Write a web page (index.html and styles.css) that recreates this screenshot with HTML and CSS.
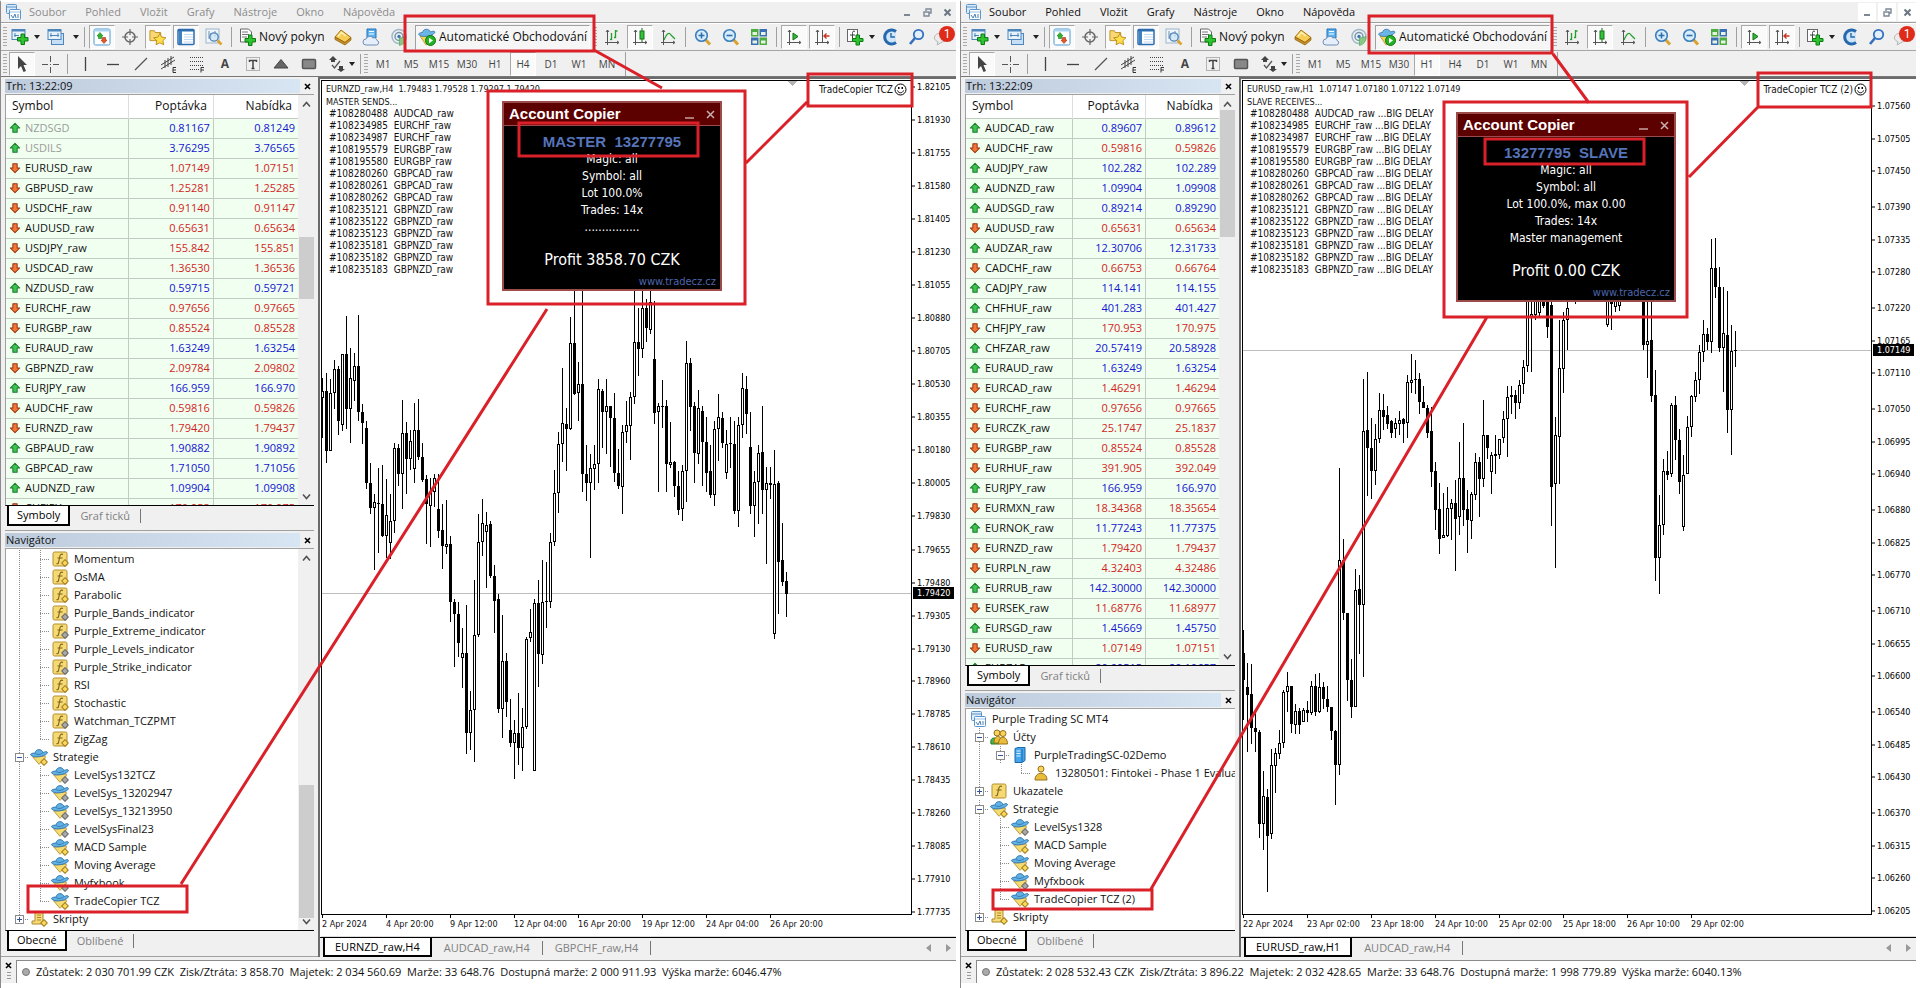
FILE: index.html
```html
<!DOCTYPE html>
<html lang="cs">
<head>
<meta charset="utf-8">
<title>Account Copier – MetaTrader 4</title>
<link rel="stylesheet" href="styles.css">
</head>
<body>
<svg class="sprite" aria-hidden="true">
  <symbol id="app" viewBox="0 0 16 16"><rect x="1.5" y=".5" width="10" height="9" rx="1" fill="#dcebfa" stroke="#5b94c9"/><path d="M2 3h9" stroke="#5b94c9"/><rect x="4.500" y="5.500" width="11" height="10" rx="1" fill="#fff" stroke="#5b94c9"/><path d="M5 8h10" stroke="#9cc3e6"/><path d="M6 11l2 3 2-4 1 4M13 10v4" stroke="#4a80b5" fill="none"/></symbol>
  <symbol id="newchart" viewBox="0 0 18 18"><rect x="1" y="1.500" width="13" height="10" fill="#e8f2fb" stroke="#4d86bd"/><path d="M1 2.500h13" stroke="#4d86bd" stroke-width="2"/><path d="M4 5v4M3 7.500h5" stroke="#4d86bd"/><path d="M10 6h3.500v3.500H17v3.500h-3.500v3.500H10V13H6.500V9.500H10z" fill="#2fc32f" stroke="#0b7a12"/></symbol>
  <symbol id="profiles" viewBox="0 0 18 18"><rect x="4.500" y="5.500" width="12" height="11" fill="#c9dff3" stroke="#4d86bd"/><rect x="1" y="1.500" width="13" height="10" fill="#e8f2fb" stroke="#4d86bd"/><path d="M1 2.500h13" stroke="#4d86bd" stroke-width="2"/><path d="M4 5v4M11 5v4M3 7.500h9" stroke="#4d86bd"/></symbol>
  <symbol id="watch" viewBox="0 0 18 18"><rect x="1" y="1" width="16" height="16" rx="1.500" fill="#fff" stroke="#4d9ad0"/><path d="M1.500 2.500h15" stroke="#a5d3f1" stroke-width="2"/><path d="M7 4.500l3 3.500H8.500v2.500h-3V8H4z" fill="#2fb52f" stroke="#157a1b" stroke-width=".6"/><path d="M11 15.500L8 12h1.500V9.500h3V12H14z" fill="#e9552b" stroke="#a52f10" stroke-width=".6"/></symbol>
  <symbol id="target" viewBox="0 0 18 18"><circle cx="9" cy="9" r="5" fill="none" stroke="#666" stroke-width="1.500"/><path d="M9 1v6M9 11v6M1 9h6M11 9h6" stroke="#666" stroke-width="1.200"/></symbol>
  <symbol id="folder" viewBox="0 0 20 18"><path d="M1 2h5l1 2h6v9H1z" fill="#f7d873" stroke="#bb8d20"/><path d="M12 5l2.100 4.200 4.700.6-3.400 3.200.9 4.600L12 15.400 7.800 17.600l.8-4.600-3.400-3.200 4.700-.6z" fill="#ffe04a" stroke="#b88617"/></symbol>
  <symbol id="navpane" viewBox="0 0 18 18"><rect x="1" y="1.500" width="16" height="15" rx="1" fill="#fff" stroke="#2d6cad" stroke-width="1.500"/><path d="M1 2.500h16" stroke="#2d6cad" stroke-width="2"/><rect x="2" y="3" width="3" height="13" fill="#3f80c2"/><path d="M7 6.500h9M7 9h9M7 11.500h9M7 14h9" stroke="#c1daf3"/></symbol>
  <symbol id="tester" viewBox="0 0 18 18"><rect x="1" y="1" width="13" height="14" fill="#f0f6fc" stroke="#9bb4cc"/><path d="M4 3v8M6 5v5M10 3v6" stroke="#6d8fb3"/><circle cx="9" cy="9" r="4.200" fill="#cfe6f8" fill-opacity=".8" stroke="#5183b4" stroke-width="1.300"/><path d="M12.500 12.500l4 4" stroke="#dca32c" stroke-width="2.500"/></symbol>
  <symbol id="order" viewBox="0 0 18 18"><path d="M1.500 1h8l3 3v10h-11z" fill="#fff" stroke="#666"/><path d="M3 4h6M3 6.500h7M3 9h5" stroke="#777"/><path d="M9.500 7h3.500v3.500h3.500v3.500H13v3.500H9.500V14H6v-3.500h3.500z" fill="#2fc32f" stroke="#0b7a12"/></symbol>
  <symbol id="book" viewBox="0 0 18 18"><path d="M1 9l6-7 10 7.500-6 5z" fill="#f5cd57" stroke="#a8761a"/><path d="M1 9v2.500l10 5.500 6-5V9.500l-6 5z" fill="#c98d24" stroke="#8a5d10" stroke-width=".7"/><path d="M4 8.500L7.500 4.500 12 8" stroke="#fff2b8" stroke-width="1.500" fill="none"/></symbol>
  <symbol id="cloud" viewBox="0 0 18 18"><path d="M5 1h9v9l-9 1z" fill="#5bb2ee" stroke="#2071b8"/><path d="M7 3.500h5M7 6h5" stroke="#fff"/><path d="M4 17a3 3 0 0 1 0-6 4 4 0 0 1 7-1 3 3 0 0 1 4 2.500 2.300 2.300 0 0 1-.5 4.500z" fill="#e5eefa" stroke="#6f8fbb"/></symbol>
  <symbol id="signal" viewBox="0 0 18 18"><circle cx="9" cy="8.500" r="7" fill="none" stroke="#9fb9c9" stroke-width="1.500"/><circle cx="9" cy="8.500" r="4" fill="none" stroke="#7797ad" stroke-width="1.500"/><path d="M9.500 10v7.500a8 8 0 0 0 6.500-9l-3 1z" fill="#8ac786" stroke="#4fae51" stroke-width=".7"/><circle cx="9" cy="8.500" r="1.700" fill="#3c79b4"/></symbol>
  <symbol id="auto" viewBox="0 0 18 18"><path d="M2 8l6 9 7-4V8z" fill="#f3d65a" stroke="#b9902a" stroke-width=".8"/><path d="M.7 6.500C3 9.500 13 9 17 4.500c0-1.500-2-1.500-3-1L12.500 4C11 0 5 .500 4.500 4.500 2 4.500.5 5.500.7 6.500z" fill="#6cb6e6" stroke="#2b73ad" stroke-width=".8"/><circle cx="12.500" cy="12.500" r="5" fill="#24b324" stroke="#0d7513"/><path d="M11 9.800v5.400l4-2.700z" fill="#fff"/></symbol>
  <symbol id="bars" viewBox="0 0 18 18"><path d="M4.500 2v15M2 14.500h14M3 4l1.500-2L6 4M14 13l2 1.500L14 16" fill="none" stroke="#555"/><path d="M8.500 5v7M7 11.500h1.500M12.500 2v8M12.500 3h2M11 9.500h1.500" stroke="#259d2c" stroke-width="1.300"/></symbol>
  <symbol id="candle" viewBox="0 0 18 18"><path d="M4.500 2v15M2 14.500h14M3 4l1.500-2L6 4M14 13l2 1.500L14 16" fill="none" stroke="#555"/><path d="M11 0v14" stroke="#127019"/><rect x="9" y="3" width="4" height="8" fill="#35c23b" stroke="#127019"/></symbol>
  <symbol id="line" viewBox="0 0 18 18"><path d="M4.500 2v15M2 14.500h14M3 4l1.500-2L6 4M14 13l2 1.500L14 16" fill="none" stroke="#555"/><path d="M5 12c3-7 5-8 7-5l4 4" stroke="#259d2c" fill="none" stroke-width="1.200"/></symbol>
  <symbol id="zoomin" viewBox="0 0 18 18"><path d="M11 11l5 5.500" stroke="#d9a32e" stroke-width="3"/><circle cx="7.500" cy="7.500" r="5.800" fill="#d8edfb" stroke="#3b7ebd" stroke-width="1.600"/><path d="M4.500 7.500h6M7.500 4.500v6" stroke="#2f6eae" stroke-width="1.600"/></symbol>
  <symbol id="zoomout" viewBox="0 0 18 18"><path d="M11 11l5 5.500" stroke="#d9a32e" stroke-width="3"/><circle cx="7.500" cy="7.500" r="5.800" fill="#d8edfb" stroke="#3b7ebd" stroke-width="1.600"/><path d="M4.500 7.500h6" stroke="#2f6eae" stroke-width="1.600"/></symbol>
  <symbol id="tiles" viewBox="0 0 18 18"><path d="M1 1h7.500v7.500H1zM9.500 9.500H17V17H9.500z" fill="#4cae3f"/><path d="M9.500 1H17v7.500H9.500zM1 9.500h7.500V17H1z" fill="#3d6fb5"/><path d="M2.500 4h4.500v3H2.500zM11 4h4.500v3H11zM2.500 12.500h4.500v3H2.500zM11 12.500h4.500v3H11z" fill="#e7f3e2"/></symbol>
  <symbol id="scroll" viewBox="0 0 18 18"><path d="M4.500 2v15M2 14.500h14M3 4l1.500-2L6 4M14 13l2 1.500L14 16" fill="none" stroke="#555"/><path d="M8 5v7l5-3.500z" fill="#35b83b" stroke="#127019"/></symbol>
  <symbol id="shift" viewBox="0 0 18 18"><path d="M4.500 2v15M2 14.500h14M3 4l1.500-2L6 4M14 13l2 1.500L14 16M9.500 2v12" fill="none" stroke="#555"/><path d="M11 8h5.500M13.500 5.500L11 8l2.500 2.500" fill="none" stroke="#c8341d" stroke-width="1.400"/></symbol>
  <symbol id="indic" viewBox="0 0 18 18"><rect x="1.500" y="1.500" width="10" height="12" fill="#fff" stroke="#666"/><path d="M9 3.500c-2-1-2.500 0-2.500 2v6M4 7h5" stroke="#444" fill="none"/><path d="M10 7h3.500v3.500H17v3h-3.500V17H10v-3.500H6.500v-3H10z" fill="#2fc32f" stroke="#0b7a12"/></symbol>
  <symbol id="clock" viewBox="0 0 18 18"><path d="M14 3.500A7 7 0 1 0 14 14.500" fill="#cfe5f8" stroke="#2568ad" stroke-width="3"/><path d="M9 5v4h4" stroke="#2568ad" fill="none" stroke-width="1.400"/></symbol>
  <symbol id="find" viewBox="0 0 18 18"><circle cx="10.500" cy="6.500" r="4.700" fill="#e3f0fc" stroke="#3470bd" stroke-width="1.800"/><path d="M7 10l-5 6" stroke="#3470bd" stroke-width="2.600"/></symbol>
  <symbol id="chat" viewBox="0 0 18 18"><path d="M7 5c8-1 11 7 2 9l-5 3 1-3C-1 11 1 6 7 5z" fill="#ececec" stroke="#b5b5b5"/></symbol>
  <symbol id="cursor" viewBox="0 0 18 18"><path d="M5 1v13l3-3 2.500 6 2.500-1-2.500-6H14z" fill="#444"/></symbol>
  <symbol id="cross" viewBox="0 0 18 18"><path d="M9.500 1v6M9.500 12v6M1 9.500h6M12 9.500h6M9 9.500h1" stroke="#555"/></symbol>
  <symbol id="vline" viewBox="0 0 18 18"><path d="M9.500 2v14" stroke="#444" stroke-width="1.300"/></symbol>
  <symbol id="hline" viewBox="0 0 18 18"><path d="M3 9.500h12" stroke="#444" stroke-width="1.300"/></symbol>
  <symbol id="trend" viewBox="0 0 18 18"><path d="M3 15L15 3" stroke="#555" stroke-width="1.200"/></symbol>
  <symbol id="channel" viewBox="0 0 18 18"><path d="M1 10L14 2M1 14L15 5M5 5v8M8 3v9M11 1v9" stroke="#444"/><path d="M16 12.500h-3v5h3M13 15h3" stroke="#333" fill="none"/></symbol>
  <symbol id="fibo" viewBox="0 0 18 18"><path d="M2 2.500h14M2 6.500h14M2 10.500h14" stroke="#444" stroke-dasharray="1 1"/><path d="M2 14.500h9" stroke="#444" stroke-dasharray="1 1"/><path d="M16 12.500h-3v5M13 15h3" stroke="#333" fill="none"/></symbol>
  <symbol id="label" viewBox="0 0 18 18"><rect x="2.500" y="2.500" width="13" height="13" fill="none" stroke="#777" stroke-dasharray="1 1"/><path d="M5.500 7V5.500h7V7M9 5.500v8M7.500 13.500h3" stroke="#444" stroke-width="1.500" fill="none"/></symbol>
  <symbol id="tri" viewBox="0 0 18 18"><path d="M9 4.500l7 8.500H2z" fill="#666" stroke="#444"/></symbol>
  <symbol id="rect" viewBox="0 0 18 18"><rect x="2.500" y="4.500" width="13" height="9" rx="1" fill="#888" stroke="#555" stroke-width="1.500"/></symbol>
  <symbol id="arrows" viewBox="0 0 18 18"><path d="M5 1l4 4H7v2H3V5H1zM13 17l-4-3h2v-3h4v3h2z" fill="#444"/><path d="M4 10l2.500 3L12 6" stroke="#555" fill="none" stroke-width="1.300"/></symbol>
  <symbol id="up" viewBox="0 0 14 14"><path d="M7 1.500L12.500 7H9.500v5h-5V7h-3z" fill="#3cc552" stroke="#1d7a2c" stroke-width="1.200" stroke-linejoin="round"/></symbol>
  <symbol id="down" viewBox="0 0 14 14"><path d="M7 12.500L1.500 7h3V2h5v5h3z" fill="#f47638" stroke="#98360f" stroke-width="1.200" stroke-linejoin="round"/></symbol>
  <symbol id="fx" viewBox="0 0 16 16"><rect x="1" y="1" width="14" height="14" rx="1.500" fill="#f5da74" stroke="#b58e30"/><path d="M11 3.500c-2-1-3 .5-3.300 2.500L6.500 11.500c-.3 1.200-1 1.500-2 1M5.500 7h5" stroke="#7d611b" fill="none" stroke-width="1.100"/></symbol>
  <symbol id="ea" viewBox="0 0 16 16"><path d="M2.500 8L8 14.500 13.500 9V7z" fill="#f5dc70" stroke="#b9902a" stroke-width=".8"/><path d="M.5 6C2 9 12 8.500 15.500 4.500c0-1.500-1.500-1.500-2.500-1L11.500 4C10.500.5 5 .5 4.500 4.500 2 4.500.3 5 .5 6z" fill="#62b1e4" stroke="#2b73ad" stroke-width=".8"/><path d="M4.500 5c2 1.300 5 1 7-.8" stroke="#2b73ad" stroke-width=".7" fill="none"/></symbol>
  <symbol id="gem" viewBox="0 0 6 6"><path d="M3 .5L5.500 3 3 5.500.5 3z" fill="#f9d95c" stroke="#a98020" stroke-width=".8"/></symbol>
  <symbol id="gemgray" viewBox="0 0 6 6"><path d="M3 .5L5.500 3 3 5.500.5 3z" fill="#a9a9a9" stroke="#6c6c6c" stroke-width=".8"/></symbol>
  <symbol id="script" viewBox="0 0 16 16"><path d="M4 1h8v9h2v3H1v-3h3z" fill="#f5db78" stroke="#b1892c"/><path d="M6 4h4M6 6.500h4M6 9h4" stroke="#b1892c"/></symbol>
  <symbol id="users" viewBox="0 0 18 16"><path d="M1 15c-1-6 2-6 4-6l4 6z" fill="#4bb648" stroke="#23782b"/><circle cx="7" cy="4" r="3" fill="#f6d35a" stroke="#97701b"/><path d="M4 14c0-8 6-8 7-4v4z" fill="#e9bd3c" stroke="#97701b"/><circle cx="13" cy="4.500" r="3" fill="#f6d35a" stroke="#97701b"/><path d="M8.500 15c0-9 9-9 9 0z" fill="#e9bd3c" stroke="#97701b"/></symbol>
  <symbol id="user" viewBox="0 0 16 16"><circle cx="8" cy="4" r="3" fill="#f6d35a" stroke="#97701b"/><path d="M2 15c0-9 12-9 12 0z" fill="#e9bd3c" stroke="#97701b"/></symbol>
  <symbol id="server" viewBox="0 0 16 16"><path d="M3 1.500l3-1h7v13l-3 2H3z" fill="#45a5ea" stroke="#1b69ad"/><path d="M10 2v13" stroke="#1b69ad"/><path d="M4.500 4h4M4.500 6.500h4M4.500 9h4" stroke="#dff0fc"/></symbol>
</svg>
<main class="screen" id="screen"></main>
<script src="app.js"></script>
</body>
</html>
```
FILE: styles.css
```css
* { box-sizing: border-box; }
body {
  margin: 0;
  background: #fff;
  color: #111;
  font: 11px/18px "Open Sans", "Noto Sans", sans-serif;
}
button { font: inherit; color: inherit; background: none; border: 0; padding: 0; margin: 0; }
ul { list-style: none; margin: 0; padding: 0; }
.sprite { position: absolute; width: 0; height: 0; }
.screen { display: flex; min-height: 100vh; height: 100vh; overflow: hidden; }

.window {
  flex: 1;
  min-width: 0;
  display: flex;
  flex-direction: column;
  position: relative;
  border-left: 1px solid #8a8a8a;
  border-top: 2px solid #fff;
  padding-bottom: 5px;
  background: #fff;
  overflow: hidden;
}

/* menu */
.menubar { display: flex; align-items: center; height: 21px; background: #f0f0f0; border-bottom: 1px solid #a0a0a0; padding-left: 4px; margin-right: 4px; }
.menubar .icon { margin-right: 8px; }
.menubar nav { display: flex; gap: 19px; flex: 1; }
.inactive .menubar nav { color: #8c8c8c; }
.mdi { display: flex; gap: 2px; height: 18px; }
.mdi button { width: 18px; display: grid; place-items: center; background: #fff; }
.inactive .mdi button { background: #f0f0f0; }
.icon { display: block; flex: none; }

/* toolbars */
.toolbar { display: flex; align-items: center; background: #f0f0f0; border-bottom: 1px solid #a6a6a6; padding-left: 2px; margin-right: 4px; }
.toolbar.main { height: 28px; border-top: 1px solid #fff; }
.toolbar.tools { height: 26px; color: #444; border-bottom-color: #777; font-size: 10px; }
.grip { width: 4px; height: 20px; margin-right: 1px; background: repeating-linear-gradient(#aaa 0 1px, transparent 1px 3px); flex: none; }
.tool { flex: none; width: 28px; height: 24px; display: grid; place-items: center; position: relative; }
.tool.pressed { background: #fafafa; border: 1px solid #a8a8a8; border-right-color: #fff; border-bottom-color: #fff; width: 26px; margin: 0 1px; }
.tool b { font: bold 12px "Open Sans", sans-serif; }
.tool.near { width: 23px; }
.drop { flex: none; width: 11px; height: 24px; display: grid; place-items: center; }
.tools .drop { margin-left: -5px; }
.drop::after { content: ""; border: 3px solid transparent; border-top: 4px solid #222; border-bottom: 0; }
.sep { width: 1px; height: 20px; background: #a0a0a0; margin: 0 3px; flex: none; }
.sep.tall { height: 24px; margin: 0 3px 0 4px; }
.order { display: flex; align-items: center; gap: 2px; width: 94px; padding-left: 4px; font-size: 12px; white-space: nowrap; }
.auto { display: flex; align-items: center; gap: 3px; width: 175px; height: 25px; padding-left: 2px; font-size: 12px; white-space: nowrap; background: #f6f6f6; border: 1px solid #a0a0a0; border-right-color: #fff; border-bottom-color: #fff; margin: 0 3px 0 2px; }
.badge { position: absolute; left: 11px; top: 1px; width: 16px; height: 16px; border-radius: 50%; background: #df2b1a; color: #fff; font: 12px/16px Roboto, sans-serif; text-align: center; }

/* body */
.body { flex: 1; min-height: 0; display: flex; }
.dock { flex: none; width: 317px; display: flex; flex-direction: column; background: #f0f0f0; padding: 2px 4px 5px 4px; border-bottom: 1px solid #a0a0a0; }
.active .dock { width: 278px; }
.panel-title { display: flex; justify-content: space-between; align-items: center; height: 14px; line-height: 14px; margin-bottom: 1px; padding-left: 1px; background: linear-gradient(90deg, #bdcbdc, #d9e6f4); }
.panel-title button { width: 14px; height: 14px; background: #f0f0f0; display: grid; place-items: center; }
.market { flex: 1; min-height: 0; display: flex; flex-direction: column; }
.list { flex: 1; min-height: 0; display: flex; overflow: hidden; background: #fff; border: 1px solid #a0a0a0; border-right: 0; border-bottom: 1px solid #000; }
.list .content { flex: 1; min-width: 0; overflow: hidden; }
.scroll { flex: none; width: 16px; display: flex; flex-direction: column; align-items: center; background: #f0f0f0; padding: 6px 0 5px; }
.scroll i { display: block; width: 15px; background: #cdcdcd; }
.scroll .pre { flex: var(--before); }
.scroll i { flex: var(--size); }
.scroll .post { flex: var(--after); }
.quotes { width: 100%; border-collapse: collapse; table-layout: fixed; }
.quotes th { font-weight: 400; font-size: 12px; height: 23px; padding: 0 6px; text-align: right; border-right: 1px solid #ddd; }
.quotes th:first-child { text-align: left; width: 42%; }
.quotes th:last-child { border-right: 0; }
.quotes td { height: 20px; padding: 0 3px; line-height: 18px; background: #f0fff0; border: 1px solid #c3cac3; text-align: right; color: #1414d2; overflow: hidden; }
.quotes td:first-child { border-left: 0; color: #111; text-align: left; padding-left: 3px; }
.quotes td:last-child { border-right: 0; }
.quotes td div { display: flex; align-items: center; gap: 4px; }
.quotes .fall td + td { color: #d21e1e; }
.quotes .off td:first-child { color: #9c9c9c; }

.tabs { display: flex; align-items: center; height: 20px; flex: none; color: #808080; padding-left: 2px; }
.tabs button { height: 20px; padding: 0 10px; }
.tabs button.on { background: #fff; color: #000; border: 2px solid #000; border-top: 0; padding: 0 8px; }
.tabs span { width: 1px; height: 14px; background: #777; }
.navigator { margin-top: 4px; border-top: 1px solid #a0a0a0; padding-top: 2px; flex: none; }
.tree { padding: 1px 0 2px; overflow: hidden; white-space: nowrap; }
.active .tree { padding-bottom: 4px; }
.tree li { display: flex; align-items: center; height: 18px; }
.tree .root { padding-left: 3px; }
.tree .cell { flex: none; width: 21px; height: 18px; display: grid; place-items: center; --v: repeating-linear-gradient(#8a8a8a 0 1px, transparent 1px 2px); --h: repeating-linear-gradient(90deg, #8a8a8a 0 1px, transparent 1px 2px); }
.tree .cell:first-child { margin-left: 3px; }
.tree .v { background: var(--v) 10px 0 / 1px 18px no-repeat; }
.tree .t { background: var(--v) 10px 0 / 1px 18px no-repeat, var(--h) 10px 9px / 10px 1px no-repeat; }
.tree .e { background: var(--v) 10px 0 / 1px 9px no-repeat, var(--h) 10px 9px / 10px 1px no-repeat; }
.tree .glyph { position: relative; flex: none; width: 18px; margin: 0 5px 0 0; display: grid; place-items: center; }
.tree .glyph .icon + .icon { position: absolute; right: 0; bottom: 0; }
.box { width: 9px; height: 9px; border: 1px solid #8a8a8a; background: #fff linear-gradient(#33559a, #33559a) center / 5px 1px no-repeat; }
.box.plus { background: linear-gradient(#33559a, #33559a) center / 5px 1px no-repeat, linear-gradient(#33559a, #33559a) center / 1px 5px no-repeat, #fff; }

/* chart */
.chart { flex: 1; min-width: 0; display: flex; flex-direction: column; border-left: 2px solid #6b6b6b; border-top: 2px solid #6b6b6b; margin-right: 4px; font: 9px/12px "DejaVu Sans Condensed", "DejaVu Sans", sans-serif; background: #fff; padding: 1px 0 0 1px; }
.upper { flex: 1; min-height: 0; display: flex; }
.plot { flex: 1; min-width: 0; position: relative; border: 1px solid #000; overflow: hidden; }
.plot > svg { display: block; width: 100%; height: 100%; }
.axis { flex: none; width: 44px; }
.axis svg { display: block; width: 100%; height: 100%; }
.log { position: absolute; left: 4px; top: 2px; white-space: pre; font-size: 10px; }
.log li { height: 12px; padding-left: 3px; }
.log li:first-child { padding-left: 0; height: 13px; font-size: 9px; }
.log li:nth-child(2) { padding-left: 0; font-size: 9px; }
.expert { position: absolute; right: 4px; top: 2px; display: flex; align-items: center; gap: 1px; font-size: 10px; }
.times { display: flex; height: 22px; flex: none; border-bottom: 1px solid #ddd; padding-left: 1px; white-space: nowrap; }
.times li { width: 64px; padding-top: 3px; flex: none; }
.times li::before { content: ""; display: block; width: 1px; height: 3px; background: #000; margin-top: -3px; }
.chart-tabs { display: flex; align-items: center; height: 20px; flex: none; background: #f0f0f0; border-top: 1px solid #000; margin-left: -1px; padding: 0 4px 0 3px; color: #808080; font: 11px/15px "Open Sans", sans-serif; }
.chart-tabs button { padding: 0 12px; height: 18px; }
.chart-tabs button.on { background: #fff; color: #000; border: 2px solid #000; border-top: 0; height: 19px; margin-top: -1px; padding: 0 10px; }
.chart-tabs span { width: 1px; height: 14px; background: #777; }
.chart-tabs .arrows { width: auto; height: auto; background: none; margin-left: auto; display: flex; gap: 14px; }

/* copier dialog */
.copier { position: absolute; left: 180px; top: 20px; width: 220px; height: 190px; background: #000; border: 2px solid #9c4b4b; color: #fff; text-align: center; font: 12px/17px "DejaVu Sans Condensed", "DejaVu Sans", sans-serif; display: flex; flex-direction: column; }
.active .copier { left: 213px; top: 31px; }
.copier header { display: flex; align-items: center; height: 23px; background: #5c0000; border-bottom: 1px solid #9c4b4b; padding: 0 5px; font: bold 15px/20px "Liberation Sans", Arial, sans-serif; gap: 12px; flex: none; }
.copier header span { flex: 1; text-align: left; }
.copier h2 { margin: 7px 0 1px; font: bold 15px/17px "Liberation Sans", Arial, sans-serif; color: #5674b9; white-space: pre; }
.copier p { margin: 0; }
.copier .profit { margin-top: 14px; font-size: 16px; line-height: 20px; }
.copier a { margin: auto 4px 0 0; text-align: right; color: #4d66ae; text-decoration: none; font-size: 11px; line-height: 15px; }

.status { display: flex; align-items: center; background: #f0f0f0; height: 26px; margin-right: 4px; flex: none; }
.status .side { width: 15px; height: 22px; display: flex; flex-direction: column; align-items: center; gap: 3px; padding-top: 3px; }
.status .side i { width: 4px; height: 8px; background: repeating-linear-gradient(#999 0 1px, transparent 1px 3px); }
.status output { flex: 1; display: flex; align-items: center; gap: 6px; background: #fff; border-top: 1px solid #8a8a8a; border-left: 1px solid #8a8a8a; height: 23px; padding-left: 5px; white-space: pre; margin-top: 2px; }
.dot { width: 8px; height: 8px; border-radius: 50%; background: #aaa; border: 1px solid #777; }
.notes { position: absolute; left: -1px; top: -2px; width: 960px; height: 988px; pointer-events: none; fill: none; stroke: #da2129; stroke-width: 3; }
```
FILE: app.js
```javascript
const icon = (id, w = 18, h = w) => `<svg class="icon" width="${w}" height="${h}"><use href="#${id}"/></svg>`;
const tool = (id, name, cls = '') => `<button class="tool ${cls}" aria-label="${name}">${icon(id)}</button>`;
const drop = '<button class="drop" aria-label="Další volby"></button>';
const sep = '<span class="sep"></span>';
const cross = '<svg width="7" height="7"><path d="M1 1l5 5M6 1L1 6" stroke="#000" stroke-width="1.600"/></svg>';

const signals = [['108280488', 'AUDCAD'], ['108234985', 'EURCHF'], ['108234987', 'EURCHF'], ['108195579', 'EURGBP'],
  ['108195580', 'EURGBP'], ['108280260', 'GBPCAD'], ['108280261', 'GBPCAD'], ['108280262', 'GBPCAD'],
  ['108235121', 'GBPNZD'], ['108235122', 'GBPNZD'], ['108235123', 'GBPNZD'], ['108235181', 'GBPNZD'],
  ['108235182', 'GBPNZD'], ['108235183', 'GBPNZD']];

// Each candle: wick top, body top, body bottom, wick bottom, 1 = falling
const candlesH4 = `298,311,318,358,0 293,311,371,383,1 299,313,371,371,0 280,289,313,329,0 286,289,341,355,1 274,274,345,351,0 236,274,329,349,1 268,298,329,363,0 273,286,301,321,0 235,286,332,341,1
324,332,343,364,1 341,348,403,409,1 383,403,428,434,1 414,422,428,490,0 388,423,424,473,1 385,424,456,457,1 399,435,456,478,0 414,441,463,479,0 363,368,441,453,0 364,368,394,406,1
320,353,394,429,0 342,353,379,414,1 350,361,379,390,0 323,350,389,403,0 319,350,377,380,1 363,377,400,402,1 395,399,424,464,1 398,412,426,467,0 394,398,412,427,0 394,429,451,458,1
424,450,466,489,1 420,464,467,474,0 456,464,522,542,1 519,522,534,587,1 522,534,563,577,1 548,573,578,608,0 525,573,653,674,1 611,630,653,670,0 500,555,630,682,0 434,462,555,557,0
419,443,462,476,0 432,445,452,508,0 441,444,496,498,1 485,496,521,553,1 514,519,629,633,1 535,581,629,658,0 573,581,622,637,1 619,650,663,667,1 640,653,663,699,0 613,653,668,685,1
628,647,668,691,0 557,559,647,649,0 529,552,558,562,0 519,523,691,691,0 500,523,574,607,1 480,522,575,584,0 482,521,522,548,1 453,462,522,528,0 390,413,462,466,0 352,364,413,433,0
288,343,364,382,0 328,344,349,391,1 237,263,349,350,0 200,263,314,315,1 282,304,313,341,0 200,304,394,412,1 365,394,403,421,1 374,388,403,478,0 365,384,389,410,0 299,309,384,403,0
309,311,332,368,1 299,326,332,374,0 326,326,338,387,1 313,338,393,402,1 369,393,406,409,1 345,352,407,434,0 321,345,352,363,0 312,317,346,380,0 200,262,317,324,0 228,262,269,296,1
200,228,269,278,0 219,228,248,262,1 200,222,250,254,0 221,279,333,344,1 323,326,332,412,0 300,326,327,348,1 320,326,384,412,1 342,382,385,388,0 381,382,406,417,1 391,406,430,435,1
385,391,429,441,0 261,283,391,422,0 278,283,327,351,1 322,326,373,403,1 310,328,374,384,0 326,331,362,406,1 337,362,393,412,1 365,391,415,418,1 341,349,415,426,0 314,337,349,381,0
332,338,363,368,1 350,364,393,399,0 337,363,364,388,1 341,364,431,434,1 337,345,431,447,0 293,308,345,358,0 296,309,334,354,1 332,367,426,434,1 391,402,426,457,0 365,373,402,444,0
326,372,410,434,1 387,403,410,484,0 387,403,405,419,1 370,404,554,559,0 401,403,482,534,1 443,480,502,506,1 492,501,514,537,1`;

const candlesH1 = `550,573,600,640,1 583,607,615,672,1 584,614,648,664,1 632,648,652,672,1 650,652,744,758,1 691,716,744,770,0 709,717,756,812,1 669,685,754,759,0 668,673,686,713,0 650,663,674,679,0
610,612,663,668,0 592,606,612,632,0 606,606,644,653,1 624,631,645,654,0 628,631,645,654,1 628,630,642,642,0 621,630,633,642,1 601,606,633,635,0 594,606,632,636,1 593,607,632,633,0
602,607,619,629,1 606,619,627,632,1 627,627,651,660,1 650,651,685,725,1 388,480,685,695,0 459,480,533,540,1 533,533,600,621,1 579,600,627,638,1 489,510,627,627,0 495,509,525,574,1
299,351,525,597,0 292,350,368,416,1 338,368,391,419,1 344,359,391,405,0 313,330,359,363,0 314,330,337,350,1 326,335,344,349,1 340,341,353,358,1 338,343,349,358,0 331,340,344,355,0
338,339,344,363,1 295,302,343,358,0 274,300,303,313,0 280,299,300,314,1 293,299,322,334,1 306,322,328,328,1 325,328,353,358,1 327,351,392,407,1 382,391,430,450,1 403,429,459,474,1
413,455,458,458,0 407,428,456,457,0 419,423,429,460,0 400,423,439,491,1 362,398,437,455,0 343,398,430,446,1 410,429,440,473,1 412,414,441,459,0 373,382,415,420,0 377,382,399,437,1
320,355,399,407,0 355,355,368,379,1 372,375,392,414,0 355,374,376,394,0 359,359,375,379,0 331,339,358,363,0 306,317,339,377,0 306,315,317,334,0 310,315,323,339,1 300,305,323,329,0
280,287,304,314,0 200,220,286,292,0 210,234,238,292,0 210,218,235,240,0 210,215,233,237,0 210,218,226,228,1 200,218,247,258,1 200,225,407,446,1 337,355,404,488,0 240,288,357,404,0
232,240,289,313,0 210,228,240,270,0 200,210,215,218,0 200,210,220,224,1 200,205,210,214,0 200,205,210,214,1 200,205,210,214,0 200,205,210,214,1 200,205,210,214,0 200,205,210,214,1
200,205,210,214,0 200,210,245,247,0 200,212,224,250,1 200,210,227,232,0 200,210,226,231,0 200,205,210,214,1 200,205,210,214,0 200,205,210,214,1 200,205,210,214,0 200,205,210,214,1
200,210,265,270,1 222,261,265,298,0 210,260,316,322,1 290,315,478,501,1 415,445,478,514,0 379,391,445,455,0 371,391,395,400,1 323,325,394,397,0 316,325,360,380,1 349,360,402,414,1
375,395,447,451,0 336,347,394,394,0 315,316,347,357,0 292,300,317,322,0 265,272,300,314,0 240,254,272,282,0 248,254,262,270,1 159,188,262,273,0 158,188,207,218,1 187,207,268,272,1
207,253,268,312,0 211,255,330,353,1 245,271,330,375,0 251,270,271,287,1`;

const windows = [
  {
    state: 'inactive', triangle: true, frame: 'H4',
    quotes: `NZDSGD 0.81167 0.81249 up off|USDILS 3.76295 3.76565 up off|EURUSD_raw 1.07149 1.07151 down|GBPUSD_raw 1.25281 1.25285 down|USDCHF_raw 0.91140 0.91147 down|AUDUSD_raw 0.65631 0.65634 down|USDJPY_raw 155.842 155.851 down|USDCAD_raw 1.36530 1.36536 down|NZDUSD_raw 0.59715 0.59721 up|EURCHF_raw 0.97656 0.97665 down|EURGBP_raw 0.85524 0.85528 down|EURAUD_raw 1.63249 1.63254 up|GBPNZD_raw 2.09784 2.09802 down|EURJPY_raw 166.959 166.970 up|AUDCHF_raw 0.59816 0.59826 down|EURNZD_raw 1.79420 1.79437 down|GBPAUD_raw 1.90882 1.90892 up|GBPCAD_raw 1.71050 1.71056 up|AUDNZD_raw 1.09904 1.09908 up|CHFJPY_raw 170.953 170.975 down`,
    scroll: [129, 61, 194],
    treeScroll: [218, 130, 0],
    tree: `vt fx gem Momentum|vt fx gem OsMA|vt fx gem Parabolic|vt fx gemgray Purple_Bands_indicator|vt fx gemgray Purple_Extreme_indicator|vt fx gemgray Purple_Levels_indicator|vt fx gemgray Purple_Strike_indicator|vt fx gem RSI|vt fx gem Stochastic|vt fx gemgray Watchman_TCZPMT|ve fx gem ZigZag|- ea gem Strategie|vt ea gemgray LevelSys132TCZ|vt ea gemgray LevelSys_13202947|vt ea gemgray LevelSys_13213950|vt ea gemgray LevelSysFinal23|vt ea gem MACD Sample|vt ea gem Moving Average|vt ea gemgray Myfxbook|ve ea gem TradeCopier TCZ|+ script gem Skripty`,
    head: 'EURNZD_raw,H4  1.79483 1.79528 1.79297 1.79420', log: 'MASTER SENDS...', tail: '',
    expert: 'TradeCopier TCZ', marker: 470, candles: candlesH4, x0: 0, line: 512, price: '1.79420',
    axis: { top: 182105, y: 7, scale: 825 / 4370,
      values: [182105, 181930, 181755, 181580, 181405, 181230, 181055, 180880, 180705, 180530, 180355, 180180, 180005, 179830, 179655, 179480, 179305, 179130, 178960, 178785, 178610, 178435, 178260, 178085, 177910, 177735] },
    times: ['2 Apr 2024', '4 Apr 20:00', '9 Apr 12:00', '12 Apr 04:00', '16 Apr 20:00', '19 Apr 12:00', '24 Apr 04:00', '26 Apr 20:00'],
    tabs: ['EURNZD_raw,H4', 'AUDCAD_raw,H4', 'GBPCHF_raw,H4'],
    title: 'MASTER  13277795', rows: ['Magic: all', 'Symbol: all', 'Lot 100.0%', 'Trades: 14x', '................'], profit: 'Profit 3858.70 CZK',
    status: 'Zůstatek: 2 030 701.99 CZK  Zisk/Ztráta: 3 858.70  Majetek: 2 034 560.69  Marže: 33 648.76  Dostupná marže: 2 000 911.93  Výška marže: 6046.47%',
    notes: 'M405 16H594V51H405zM488 91H745V304H488zM519 123H698V156H519zM808 74H912V106H808zM28 886H187V912H28zM594 50L662 88M807 102L746 163M547 309L181 884'
  },
  {
    state: 'active', triangle: false, frame: 'H1',
    quotes: `AUDCAD_raw 0.89607 0.89612 up|AUDCHF_raw 0.59816 0.59826 down|AUDJPY_raw 102.282 102.289 up|AUDNZD_raw 1.09904 1.09908 up|AUDSGD_raw 0.89214 0.89290 up|AUDUSD_raw 0.65631 0.65634 down|AUDZAR_raw 12.30706 12.31733 up|CADCHF_raw 0.66753 0.66764 down|CADJPY_raw 114.141 114.155 up|CHFHUF_raw 401.283 401.427 up|CHFJPY_raw 170.953 170.975 down|CHFZAR_raw 20.57419 20.58928 up|EURAUD_raw 1.63249 1.63254 up|EURCAD_raw 1.46291 1.46294 down|EURCHF_raw 0.97656 0.97665 down|EURCZK_raw 25.1747 25.1837 down|EURGBP_raw 0.85524 0.85528 down|EURHUF_raw 391.905 392.049 down|EURJPY_raw 166.959 166.970 up|EURMXN_raw 18.34368 18.35654 down|EURNOK_raw 11.77243 11.77375 up|EURNZD_raw 1.79420 1.79437 down|EURPLN_raw 4.32403 4.32486 down|EURRUB_raw 142.30000 142.30000 up|EURSEK_raw 11.68776 11.68977 down|EURSGD_raw 1.45669 1.45750 up|EURUSD_raw 1.07149 1.07151 down|EURZAR_raw 20.09515 20.10657 up`,
    scroll: [2, 127, 415],
    tree: `root app - Purple Trading SC MT4|- users - Účty|v- server - PurpleTradingSC-02Demo|v_e user - 13280501: Fintokei - Phase 1 Evaluation|+ fx - Ukazatele|- ea gem Strategie|vt ea gemgray LevelSys1328|vt ea gem MACD Sample|vt ea gem Moving Average|vt ea gemgray Myfxbook|ve ea gem TradeCopier TCZ (2)|+ script gem Skripty`,
    head: 'EURUSD_raw,H1  1.07147 1.07180 1.07122 1.07149', log: 'SLAVE RECEIVES...', tail: ' ...BIG DELAY',
    expert: 'TradeCopier TCZ (2)', marker: 501, candles: candlesH1, x0: 0, line: 269, price: '1.07149',
    axis: { top: 107560, y: 26, scale: 805 / 1355,
      values: [107560, 107505, 107450, 107390, 107335, 107280, 107220, 107165, 107110, 107050, 106995, 106940, 106880, 106825, 106770, 106710, 106655, 106600, 106540, 106485, 106430, 106370, 106315, 106260, 106205] },
    times: ['22 Apr 2024', '23 Apr 02:00', '23 Apr 18:00', '24 Apr 10:00', '25 Apr 02:00', '25 Apr 18:00', '26 Apr 10:00', '29 Apr 02:00'],
    tabs: ['EURUSD_raw,H1', 'AUDCAD_raw,H4'],
    title: '13277795  SLAVE', rows: ['Magic: all', 'Symbol: all', 'Lot 100.0%, max 0.00', 'Trades: 14x', 'Master management'], profit: 'Profit 0.00 CZK',
    status: 'Zůstatek: 2 028 532.43 CZK  Zisk/Ztráta: 3 896.22  Majetek: 2 032 428.65  Marže: 33 648.76  Dostupná marže: 1 998 779.89  Výška marže: 6040.13%',
    notes: 'M409 16H592V53H409zM484 102H727V317H484zM525 139H684V164H525zM798 73H911V107H798zM33 890H192V909H33zM593 54L629 103M798 107L729 177M527 317L191 889'
  }
];

const menubar = () => `<div class="menubar">${icon('app', 16)}<nav>${['Soubor', 'Pohled', 'Vložit', 'Grafy', 'Nástroje', 'Okno', 'Nápověda'].map(m => `<button>${m}</button>`).join('')}</nav>
  <div class="mdi"><button aria-label="Minimalizovat"><svg width="9" height="9"><path d="M1 7h6" stroke="#7d8896" stroke-width="2"/></svg></button>
  <button aria-label="Obnovit"><svg width="9" height="9"><path d="M3 3V1h5v4H6M1 4h5v4H1z" fill="none" stroke="#7d8896" stroke-width="1.400"/></svg></button>
  <button aria-label="Zavřít"><svg width="9" height="9"><path d="M1.500 1.500l6 6M7.500 1.500l-6 6" stroke="#6b7684" stroke-width="2"/></svg></button></div></div>`;

const mainbar = () => `<div class="toolbar main"><span class="grip"></span>
  ${tool('newchart', 'Nový graf', 'near')}${drop}${tool('profiles', 'Profily')}${drop}${sep}
  ${tool('watch', 'Přehled trhu', 'pressed')}${tool('target', 'Datové okno')}${tool('folder', 'Navigátor', 'pressed')}${tool('navpane', 'Terminál', 'pressed')}${tool('tester', 'Tester')}${sep}
  <button class="order">${icon('order')}Nový pokyn</button>
  ${tool('book', 'MetaEditor')}${tool('cloud', 'Hosting')}${tool('signal', 'Signály')}
  <button class="auto">${icon('auto')}Automatické Obchodování</button><span class="grip"></span>
  ${tool('bars', 'Sloupce')}${tool('candle', 'Svíčky', 'pressed')}${tool('line', 'Čára')}${sep}
  ${tool('zoomin', 'Přiblížit')}${tool('zoomout', 'Oddálit')}${tool('tiles', 'Dlaždice')}${sep}
  ${tool('scroll', 'Posun', 'pressed')}${tool('shift', 'Odsazení', 'pressed')}${sep}
  ${tool('indic', 'Indikátory', 'near')}${drop}${tool('clock', 'Periody')}${tool('find', 'Hledat', 'near')}
  <button class="tool" aria-label="Zprávy">${icon('chat')}<span class="badge">1</span></button></div>`;

const toolsbar = w => `<div class="toolbar tools"><span class="grip"></span>
  ${tool('cursor', 'Kurzor', 'pressed')}${tool('cross', 'Nitkový kříž')}${sep}
  ${tool('vline', 'Svislá čára')}${tool('hline', 'Vodorovná čára')}${tool('trend', 'Trend')}${tool('channel', 'Kanál')}${tool('fibo', 'Fibonacci')}
  <button class="tool"><b>A</b></button>${tool('label', 'Popisek')}${w.triangle ? tool('tri', 'Trojúhelník') : ''}${tool('rect', 'Obdélník')}${tool('arrows', 'Šipky')}${drop}${sep}<span class="grip"></span>
  ${['M1', 'M5', 'M15', 'M30', 'H1', 'H4', 'D1', 'W1', 'MN'].map(f => `<button class="tool ${f === w.frame ? 'pressed' : ''}">${f}</button>`).join('')}<span class="sep tall"></span></div>`;

const chevron = d => `<svg width="9" height="7"><path d="${d < 0 ? 'M1 5.500l3.500-4 3.500 4' : 'M1 1.500l3.500 4 3.500-4'}" fill="none" stroke="#505050" stroke-width="1.500"/></svg>`;
const scrollbar = ([a, b, c]) => `<div class="scroll" style="--before:${a};--size:${b};--after:${c}">${chevron(-1)}<span class="pre"></span><i></i><span class="post"></span>${chevron(1)}</div>`;

const quotes = w => w.quotes.split('|').map(row => {
  const [name, bid, ask, dir, off] = row.split(' ');
  return `<tr class="${dir === 'down' ? 'fall' : ''} ${off || ''}"><td><div>${icon(dir, 12)}${name}</div></td><td>${bid}</td><td>${ask}</td></tr>`;
}).join('');

const tree = w => w.tree.split('|').map(row => {
  const [depth, glyph, gem, ...label] = row.split(' ');
  const cells = depth === 'root' ? '' : [...depth].map(c =>
    c === '-' ? '<span class="cell t"><span class="box"></span></span>' :
    c === '+' ? '<span class="cell e"><span class="box plus"></span></span>' :
    `<span class="cell ${c}"></span>`).join('');
  return `<li ${depth === 'root' ? 'class="root"' : ''}>${cells}<span class="glyph">${icon(glyph, glyph === 'ea' || glyph === 'users' ? 18 : 16)}${gem === '-' ? '' : icon(gem, 8)}</span>${label.join(' ')}</li>`;
}).join('');

const candles = w => w.candles.trim().split(/\s+/).map((c, i) => {
  const [h, t, b, l, fall] = c.split(',').map(Number);
  const x = w.x0 + i * 4;
  return `<path d="M${x} ${h - 1}h1v${Math.max(1, l - h)}h-1zM${x - 1} ${t - 1}h3v${Math.max(1, b - t)}h-3z"/>` +
    (!fall && b - t > 2 ? `<path fill="#fff" d="M${x} ${t}h1v${b - t - 2}h-1z"/>` : '');
}).join('');

const axis = w => w.axis.values.map(v => {
  const y = Math.round(w.axis.y + (w.axis.top - v) * w.axis.scale);
  return `<path d="M0 ${y}h3" stroke="#000"/><text x="5" y="${y + 3}">${(v / 100000).toFixed(5)}</text>`;
}).join('');

const view = w => `<section class="window ${w.state}">
  ${menubar()}${mainbar()}${toolsbar(w)}
  <div class="body">
    <aside class="dock">
      <div class="market"><div class="panel-title">Trh: 13:22:09<button aria-label="Zavřít">${cross}</button></div>
        <div class="list"><div class="content"><table class="quotes"><thead><tr><th>Symbol</th><th>Poptávka</th><th>Nabídka</th></tr></thead><tbody>${quotes(w)}</tbody></table></div>${scrollbar(w.scroll)}</div>
        <div class="tabs"><button class="on">Symboly</button><button>Graf ticků</button><span></span></div></div>
      <div class="navigator"><div class="panel-title">Navigátor<button aria-label="Zavřít">${cross}</button></div>
        <div class="list"><ul class="content tree">${tree(w)}</ul>${w.treeScroll ? scrollbar(w.treeScroll) : ''}</div>
        <div class="tabs"><button class="on">Obecné</button><button>Oblíbené</button><span></span></div></div>
    </aside>
    <div class="chart">
      <div class="upper"><div class="plot">
        <svg shape-rendering="crispEdges"><path d="M${w.marker - 5} 0h10l-5 5z" fill="#b5b5b5"/><path d="M0 ${w.line}.5h2000" stroke="#bdbdbd"/>${candles(w)}</svg>
        <ul class="log"><li>${w.head}</li><li>${w.log}</li>${signals.map(s => `<li>#${s[0]}  ${s[1]}_raw${w.tail}</li>`).join('')}</ul>
        <div class="expert">${w.expert}<svg width="13" height="13"><circle cx="6.500" cy="6.500" r="5.500" fill="none" stroke="#000"/><path d="M4 4h1.500v2H4zM7.500 4H9v2H7.500z"/><path d="M3.500 7.500c1 3 5 3 6 0" fill="none" stroke="#000"/></svg></div>
        <article class="copier"><header><span>Account Copier</span><svg width="9" height="9"><path d="M0 8h9" stroke="#c9a0a0" stroke-width="1.500"/></svg><svg width="9" height="9"><path d="M1 1l7 7M8 1L1 8" stroke="#c9b0b0" stroke-width="1.500"/></svg></header>
          <h2>${w.title}</h2>${w.rows.map(r => `<p>${r}</p>`).join('')}<p class="profit">${w.profit}</p><a href="#">www.tradecz.cz</a></article>
      </div><div class="axis"><svg>${axis(w)}<path d="M1 ${w.line - 5}h41v12h-41z"/><text x="5" y="${w.line + 4}" fill="#fff">${w.price}</text></svg></div></div>
      <ul class="times">${w.times.map(t => `<li>${t}</li>`).join('')}</ul>
      <div class="chart-tabs">${w.tabs.map((t, i) => `<button class="${i ? '' : 'on'}">${t}</button>${i ? '<span></span>' : ''}`).join('')}
        <span class="arrows"><svg width="6" height="8"><path d="M5 0v8L0 4z" fill="#999"/></svg><svg width="6" height="8"><path d="M0 0v8l5-4z" fill="#999"/></svg></span></div>
    </div>
  </div>
  <footer class="status"><div class="side">${cross}<i></i></div><output><span class="dot"></span>${w.status}</output></footer>
  <svg class="notes"><path d="${w.notes}"/></svg>
</section>`;

document.getElementById('screen').innerHTML = windows.map(view).join('');
```
